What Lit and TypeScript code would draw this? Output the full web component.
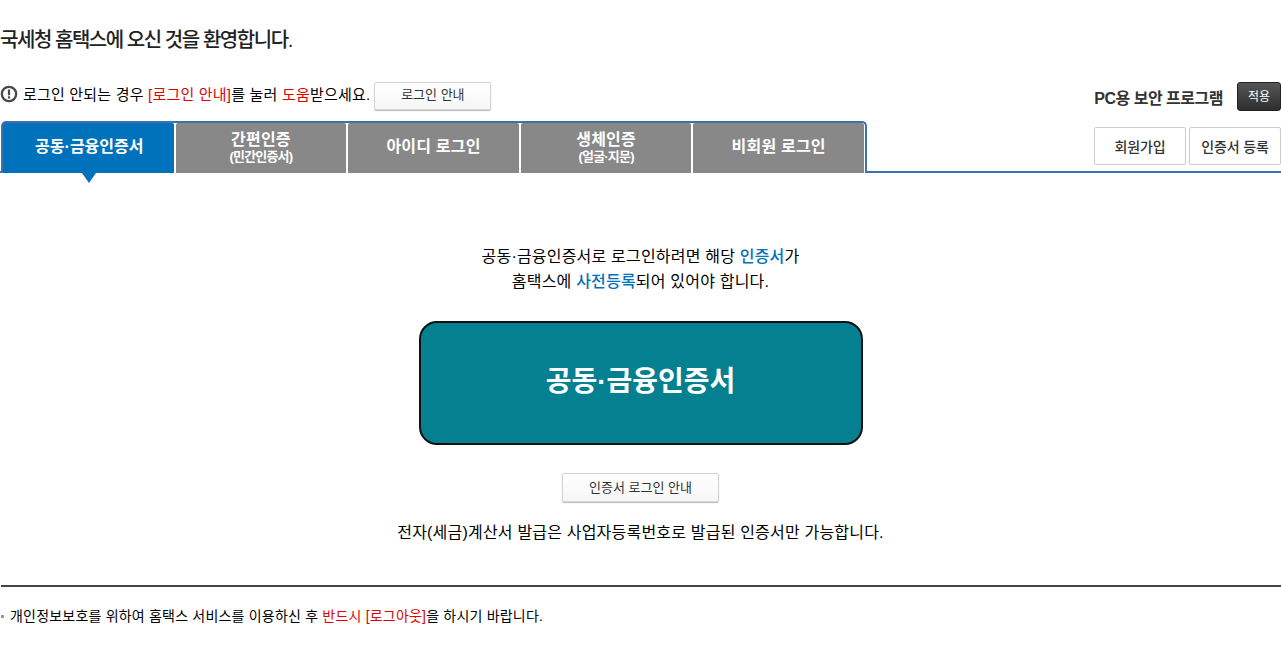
import { LitElement, html, css } from "lit";
import { customElement } from "lit/decorators.js";

const tabs = [
  { main: "공동·금융인증서", active: true },
  { main: "간편인증", sub: "(민간인증서)" },
  { main: "아이디 로그인" },
  { main: "생체인증", sub: "(얼굴·지문)" },
  { main: "비회원 로그인" },
];

@customElement("app-root")
export class AppRoot extends LitElement {
  static styles = css`
    :host {
      display: block;
      width: 1281px;
      height: 655px;
      overflow: hidden;
      background: #fff;
      color: #000;
      font-family: "Liberation Sans", "Noto Sans CJK KR", sans-serif;
      font-size: 15px;
    }
    .title {
      margin: 0;
      padding-top: 27px;
      height: 29px;
      line-height: 27px;
      font-size: 20px;
      font-weight: 500;
      letter-spacing: -1.45px;
      color: #222;
    }
    .notice-row {
      display: flex;
      justify-content: space-between;
      margin-top: 26px;
      height: 29px;
    }
    .notice {
      display: flex;
      align-items: flex-start;
      font-size: 15px;
      line-height: 25px;
      letter-spacing: 0.2px;
    }
    .notice svg { margin: 3px 5px 0 0; flex: none; }
    .red { color: #e00000; }
    .blue { color: #0072bc; font-weight: 500; }
    .btn-light {
      box-sizing: border-box;
      display: flex;
      align-items: center;
      justify-content: center;
      padding-bottom: 3px;
      border: 1px solid #d4d4d4;
      border-radius: 2px;
      background: linear-gradient(#fff, #f6f6f6);
      box-shadow: 0 1px 1px #bbb;
      font-size: 13px;
      color: #333;
      letter-spacing: 0;
    }
    .notice .btn-light { width: 117px; height: 28px; margin-left: 4px; }
    .pc { display: flex; align-items: flex-start; }
    .pc-label {
      font-size: 16px;
      font-weight: 700;
      line-height: 33px;
      color: #333;
      letter-spacing: -0.5px;
      margin-right: 14px;
    }
    .apply {
      width: 44px;
      height: 29px;
      box-sizing: border-box;
      padding-bottom: 2px;
      border: 1px solid #222;
      border-radius: 3px;
      background: linear-gradient(#555, #2e2e2e);
      color: #fff;
      font-size: 12px;
      display: flex;
      align-items: center;
      justify-content: center;
    }
    .tab-row {
      display: flex;
      margin-top: 10px;
      height: 52px;
      box-sizing: border-box;
      border-bottom: 2px solid #3c72ad;
      padding-left: 1px;
    }
    .tabs {
      display: flex;
      gap: 2px;
      box-sizing: border-box;
      height: 52px;
      width: 866px;
      background: #fff;
      border: 2px solid #3c72ad;
      border-bottom: 0;
      border-radius: 5px 5px 0 0;
    }
    .tab {
      position: relative;
      box-sizing: border-box;
      width: 170.6px;
      height: 50px;
      padding-bottom: 3px;
      background: #888;
      color: #fff;
      border-radius: 2px 2px 0 0;
      display: flex;
      flex-direction: column;
      align-items: center;
      justify-content: center;
      font-size: 16px;
      font-weight: 700;
      line-height: 21px;
      letter-spacing: 0.2px;
    }
    .tab small { font-size: 13px; line-height: 15px; letter-spacing: -0.8px; margin-top: -1px; }
    .tab.active { background: #0072bc; }
    .tab.active span { letter-spacing: 0; padding-left: 2px; }
    .tab.active::after {
      content: "";
      position: absolute;
      left: 79px;
      top: 50px;
      border: 7px solid transparent;
      border-bottom: 0;
      border-top: 10px solid #0072bc;
    }
    .actions {
      display: flex;
      gap: 3px;
      margin-left: auto;
      padding-top: 6px;
    }
    .action {
      box-sizing: border-box;
      width: 92px;
      height: 38px;
      padding-bottom: 1px;
      border: 1px solid #ccc;
      border-radius: 2px;
      display: flex;
      align-items: center;
      justify-content: center;
      font-size: 14px;
      font-weight: 500;
      letter-spacing: -0.1px;
      color: #333;
      background: #fff;
    }
    .content { display: flex; flex-direction: column; align-items: center; }
    .intro {
      margin: 71px 0 0;
      text-align: center;
      line-height: 25px;
      font-size: 16px;
      letter-spacing: 0.2px;
    }
    .cert {
      box-sizing: border-box;
      width: 444px;
      height: 124px;
      margin-top: 27px;
      padding-bottom: 8px;
      border: 2px solid #111;
      border-radius: 18px;
      background: #058090;
      color: #fff;
      font-family: inherit;
      font-size: 28px;
      font-weight: 700;
      letter-spacing: 0;
      display: flex;
      align-items: center;
      justify-content: center;
    }
    .content .btn-light { width: 157px; height: 29px; margin-top: 28px; }
    .warn { margin: 18px 0 0; font-size: 16px; line-height: 25px; letter-spacing: 0.2px; }
    .divider { height: 2px; background: #444; margin: 40px 0 0 1px; }
    .foot {
      display: flex;
      align-items: center;
      margin: 18px 0 0;
      font-size: 14px;
      line-height: 22px;
      letter-spacing: 0.2px;
    }
    .foot i { width: 3px; height: 3px; background: #999; margin: 0 6px 0 1px; }
  `;

  render() {
    return html`
      <h1 class="title">국세청 홈택스에 오신 것을 환영합니다.</h1>
      <div class="notice-row">
        <div class="notice">
          <svg width="18" height="18" viewBox="0 0 18 18">
            <circle cx="9" cy="9" r="7.2" fill="none" stroke="#4a4a4a" stroke-width="2.3"></circle>
            <rect x="7.9" y="4.5" width="2.2" height="5.8" fill="#4a4a4a"></rect>
            <rect x="7.9" y="11.3" width="2.2" height="2.2" fill="#4a4a4a"></rect>
          </svg>
          <span>로그인 안되는 경우 <span class="red">[로그인 안내]</span>를 눌러 <span class="red">도움</span>받으세요.</span>
          <div class="btn-light">로그인 안내</div>
        </div>
        <div class="pc">
          <span class="pc-label">PC용 보안 프로그램</span>
          <div class="apply">적용</div>
        </div>
      </div>
      <div class="tab-row">
        <div class="tabs">
          ${tabs.map(
            (t) => html`<div class="tab ${t.active ? "active" : ""}">
              <span>${t.main}</span>${t.sub ? html`<small>${t.sub}</small>` : ""}
            </div>`
          )}
        </div>
        <div class="actions">
          <div class="action">회원가입</div>
          <div class="action">인증서 등록</div>
        </div>
      </div>
      <div class="content">
        <p class="intro">
          공동·금융인증서로 로그인하려면 해당 <span class="blue">인증서</span>가<br />
          홈택스에 <span class="blue">사전등록</span>되어 있어야 합니다.
        </p>
        <div class="cert">공동·금융인증서</div>
        <div class="btn-light">인증서 로그인 안내</div>
        <p class="warn">전자(세금)계산서 발급은 사업자등록번호로 발급된 인증서만 가능합니다.</p>
      </div>
      <div class="divider"></div>
      <div class="foot">
        <i></i>
        <span>개인정보보호를 위하여 홈택스 서비스를 이용하신 후 <span class="red">반드시 [로그아웃]</span>을 하시기 바랍니다.</span>
      </div>
    `;
  }
}
